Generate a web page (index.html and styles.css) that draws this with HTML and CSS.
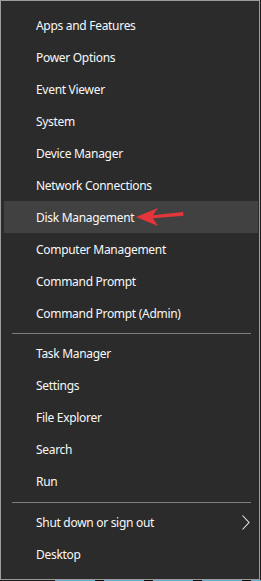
FILE: index.html
```html
<!DOCTYPE html>
<html>
<head>
<meta charset="utf-8">
<link rel="stylesheet" href="styles.css">
</head>
<body>
<div class="menu">
  <div class="item">Apps and Features</div>
  <div class="item">Power Options</div>
  <div class="item">Event Viewer</div>
  <div class="item">System</div>
  <div class="item">Device Manager</div>
  <div class="item">Network Connections</div>
  <div class="item active">Disk Management
    <svg class="pointer" width="52" height="20" viewBox="0 0 52 20">
      <path d="M0 10 L22 1 L17 8.3 L47 5 L47.5 8.8 L17 11.3 L22 19 Z" fill="#e4363a"/>
    </svg>
  </div>
  <div class="item">Computer Management</div>
  <div class="item">Command Prompt</div>
  <div class="item">Command Prompt (Admin)</div>
  <div class="sep"></div>
  <div class="item">Task Manager</div>
  <div class="item">Settings</div>
  <div class="item">File Explorer</div>
  <div class="item">Search</div>
  <div class="item">Run</div>
  <div class="sep sep-low"></div>
  <div class="item">Shut down or sign out
    <svg class="chev" width="8" height="15" viewBox="0 0 8 15">
      <path d="M0.5 0.5 L7 7.5 L0.5 14.5" fill="none" stroke="#e8e8e8" stroke-width="1.1"/>
    </svg>
  </div>
  <div class="item">Desktop</div>
</div>
<div class="taskbar">
  <span class="gap g1"></span><span class="tile"></span>
  <span class="gap"></span><span class="tile"></span>
  <span class="gap"></span><span class="tile"></span>
  <span class="gap"></span><span class="tile"></span>
  <span class="gap"></span><span class="tile rest"></span>
</div>
</body>
</html>
```
FILE: styles.css
```css
html, body {
  margin: 0;
  padding: 0;
}
body {
  width: 261px;
  height: 581px;
  background: #1c1c1c;
  font-family: "Noto Sans", "Open Sans", sans-serif;
  overflow: hidden;
}
.menu {
  box-sizing: border-box;
  width: 260px;
  height: 580px;
  background: #2b2b2b;
  border: 1px solid #9c9c9c;
  padding: 8px 0 0 0;
  display: flex;
  flex-direction: column;
}
.item {
  position: relative;
  height: 32px;
  margin: 0 1px 0 3px;
  padding-left: 32px;
  display: flex;
  align-items: center;
  color: #f8f8f8;
  font-size: 12px;
  letter-spacing: -0.3px;
  white-space: nowrap;
}
.item.active {
  background: #414141;
}
.sep {
  height: 1px;
  background: #7e7e7e;
  margin: 4px 8px 3px 11px;
}
.sep.sep-low {
  margin-top: 5px;
}
.pointer {
  position: absolute;
  left: 132px;
  top: 6px;
}
.chev {
  position: absolute;
  left: 238px;
  top: 9px;
}
.taskbar {
  display: flex;
  height: 1px;
}
.taskbar span { display: block; height: 1px; }
.gap { width: 9px; background: #111; }
.g1 { width: 55px; background: #1c1c1c; }
.tile { width: 40px; background: #6aaed6; }
.rest { flex: 1; }
```
